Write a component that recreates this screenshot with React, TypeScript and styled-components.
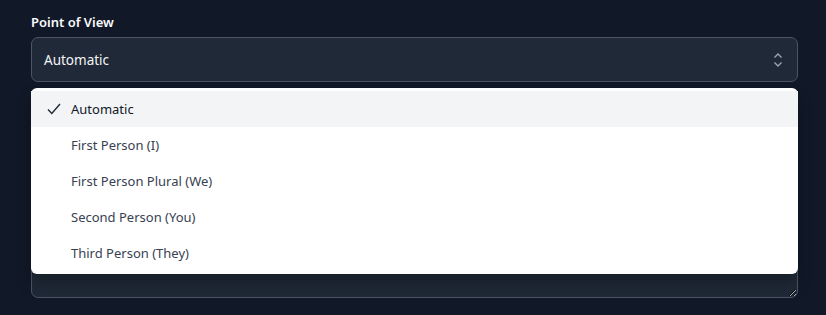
import { useState } from 'react'
import styled, { createGlobalStyle } from 'styled-components'

const options = [
  'Automatic',
  'First Person (I)',
  'First Person Plural (We)',
  'Second Person (You)',
  'Third Person (They)',
]

export default function App() {
  const [value, setValue] = useState('Automatic')

  return (
    <>
      <GlobalStyle />
      <Page>
        <Field>
          <Label>Point of View</Label>
          <SelectWrap>
            <SelectButton type="button">
              {value}
              <svg width="10" height="16" viewBox="0 0 10 16" fill="none">
                <path d="M1.5 5.5L5 2L8.5 5.5" stroke="#9ca3af" strokeWidth="1.4" />
                <path d="M1.5 10.5L5 14L8.5 10.5" stroke="#9ca3af" strokeWidth="1.4" />
              </svg>
            </SelectButton>
            <Menu>
              {options.map(opt => (
                <Option key={opt} $active={opt === value} onClick={() => setValue(opt)}>
                  <Check>
                    {opt === value && (
                      <svg width="14" height="12" viewBox="0 0 14 12" fill="none">
                        <path d="M1 6.5L4.8 10.5L13 1" stroke="#1f2937" strokeWidth="1.4" />
                      </svg>
                    )}
                  </Check>
                  {opt}
                </Option>
              ))}
            </Menu>
          </SelectWrap>
        </Field>
        <Field>
          <Label>Details</Label>
          <TextArea />
        </Field>
      </Page>
    </>
  )
}

const GlobalStyle = createGlobalStyle`
  html, body {
    margin: 0;
    background: #111827;
    font-family: "Segoe UI", "Noto Sans", "Open Sans", sans-serif;
  }
`

const Page = styled.div`
  padding: 13px 28px 0 31px;
  display: flex;
  flex-direction: column;
  gap: 16px;
`

const Field = styled.div`
  display: flex;
  flex-direction: column;
  gap: 6px;
`

const Label = styled.label`
  font-size: 13px;
  font-weight: 600;
  line-height: 18px;
  color: #f9fafb;
`

const SelectWrap = styled.div`
  position: relative;
`

const SelectButton = styled.button`
  width: 100%;
  height: 45px;
  display: flex;
  align-items: center;
  justify-content: space-between;
  padding: 0 14px 0 12px;
  background: #1f2937;
  border: 1px solid #4b5563;
  border-radius: 7px;
  color: #f3f4f6;
  font-family: inherit;
  font-size: 13.5px;
  box-sizing: border-box;
`

const Menu = styled.ul`
  position: absolute;
  top: 51px;
  left: 0;
  right: 0;
  margin: 0;
  padding: 3px 0;
  list-style: none;
  background: #ffffff;
  border-radius: 6px;
  box-shadow: 0 10px 15px rgba(0, 0, 0, 0.25);
  z-index: 2;
`

const Option = styled.li<{ $active: boolean }>`
  height: 36px;
  display: flex;
  align-items: center;
  padding-left: 16px;
  font-size: 13px;
  color: ${p => (p.$active ? '#111827' : '#374151')};
  background: ${p => (p.$active ? '#f3f4f6' : 'transparent')};
  cursor: pointer;
`

const Check = styled.span`
  width: 24px;
  display: flex;
  align-items: center;
`

const TextArea = styled.textarea`
  height: 176px;
  background: #1f2937;
  border: 1px solid #4b5563;
  border-radius: 7px;
  box-sizing: border-box;
  color: #f3f4f6;
`
